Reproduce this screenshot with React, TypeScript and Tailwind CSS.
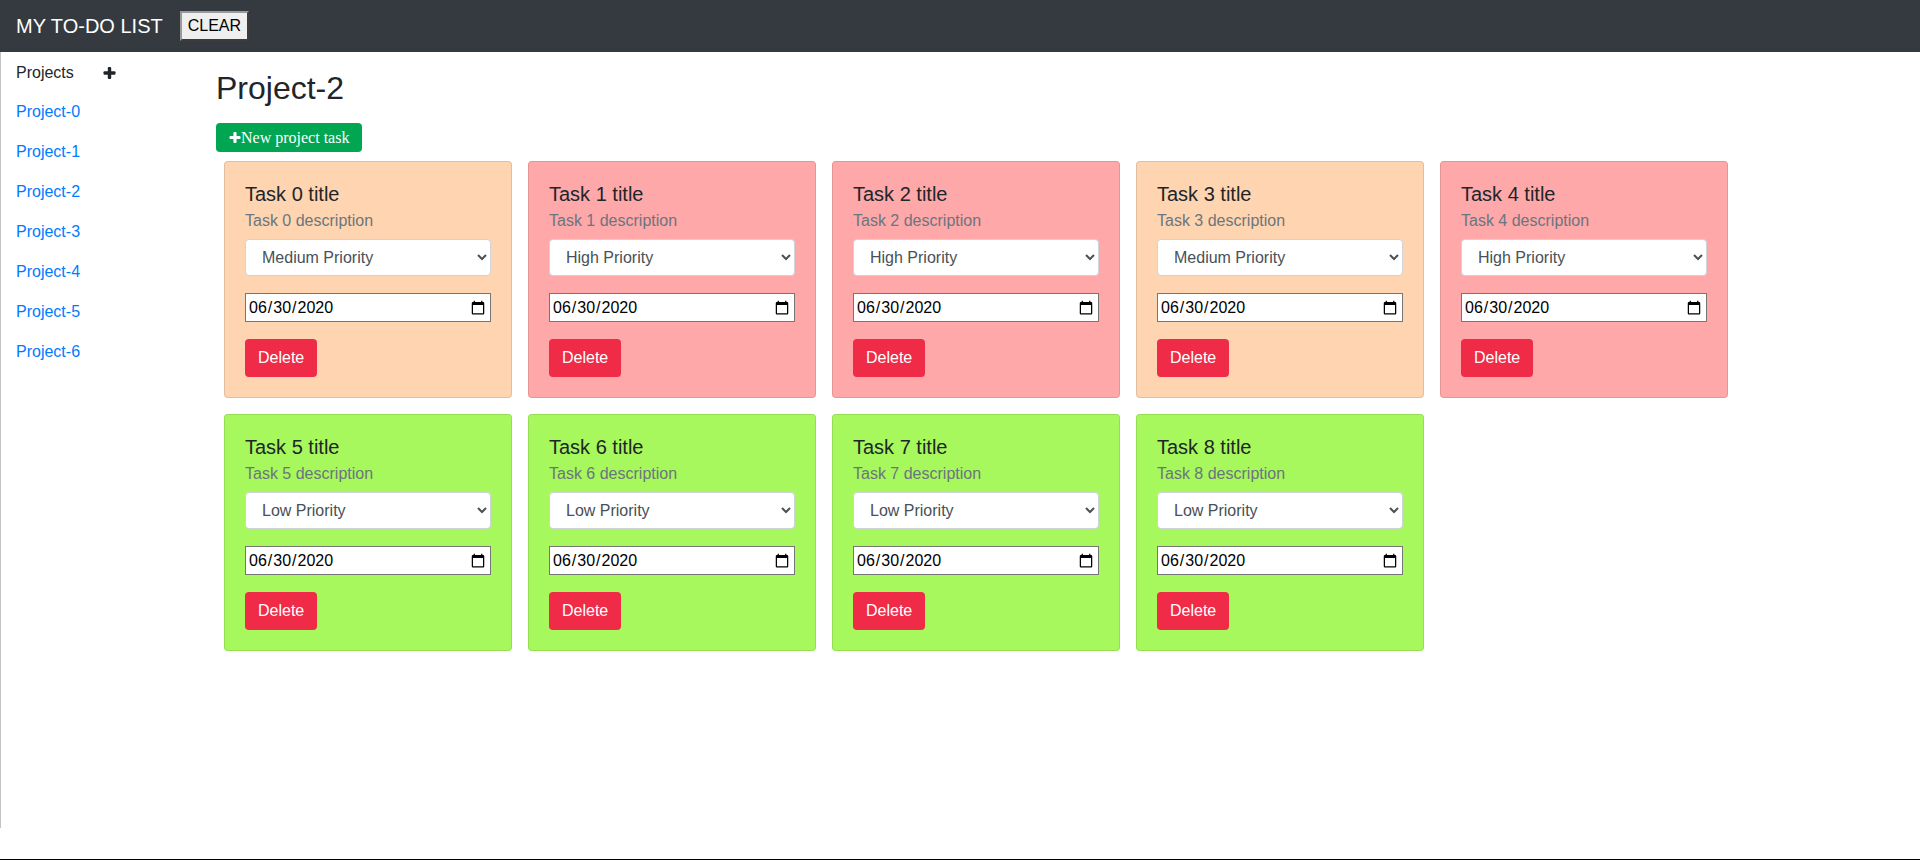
import { useState } from 'react';

type Priority = 'High' | 'Medium' | 'Low';

const cardColors: Record<Priority, string> = {
  High: 'bg-[#fea8a9]',
  Medium: 'bg-[#fed5b0]',
  Low: 'bg-[#a6f85c]',
};

const initialTasks: { id: number; priority: Priority }[] = [
  { id: 0, priority: 'Medium' },
  { id: 1, priority: 'High' },
  { id: 2, priority: 'High' },
  { id: 3, priority: 'Medium' },
  { id: 4, priority: 'High' },
  { id: 5, priority: 'Low' },
  { id: 6, priority: 'Low' },
  { id: 7, priority: 'Low' },
  { id: 8, priority: 'Low' },
];

const projects = ['Project-0', 'Project-1', 'Project-2', 'Project-3', 'Project-4', 'Project-5', 'Project-6'];

function PlusIcon({ className }: { className?: string }) {
  return (
    <svg viewBox="0 0 14 14" className={className} fill="currentColor">
      <rect x="5" y="0" width="4" height="14" rx="1.2" />
      <rect x="0" y="5" width="14" height="4" rx="1.2" />
    </svg>
  );
}

function TaskCard({ id, priority, onDelete }: { id: number; priority: Priority; onDelete: () => void }) {
  const [value, setValue] = useState<Priority>(priority);
  return (
    <div className={`w-[288px] rounded border border-black/10 px-5 pt-5 pb-5 ${cardColors[value]}`}>
      <h5 className="h-6 text-[20px] leading-6 text-[#212529]">Task {id} title</h5>
      <div className="mt-[3px] h-6 text-base leading-6 text-[#6c757d]">Task {id} description</div>
      <select
        value={value}
        onChange={(e) => setValue(e.target.value as Priority)}
        className="mt-[6px] block h-[37px] w-full rounded border border-[#ced4da] bg-white pl-3 pr-1 text-base text-[#495057]"
      >
        <option value="High">High Priority</option>
        <option value="Medium">Medium Priority</option>
        <option value="Low">Low Priority</option>
      </select>
      <input
        type="date"
        defaultValue="2020-06-30"
        className="mt-[17px] block h-[29px] w-full border border-[#767676] bg-white px-[2px] text-base text-black"
      />
      <button
        onClick={onDelete}
        className="mt-[17px] block h-[38px] rounded bg-[#ef2b47] px-[13px] text-base text-white"
      >
        Delete
      </button>
    </div>
  );
}

export default function App() {
  const [tasks, setTasks] = useState(initialTasks);
  const active = 'Project-2';

  return (
    <div className="flex h-[860px] flex-col bg-white font-['Liberation_Sans',Arial,sans-serif]">
      {/* Top bar */}
      <header className="flex h-[52px] shrink-0 items-center bg-[#343a40] px-4">
        <span className="text-[20px] text-white">MY TO-DO LIST</span>
        <button
          onClick={() => setTasks([])}
          className="ml-[17px] h-[30px] border-2 border-t-[#9a9a9a] border-l-[#9a9a9a] border-r-[#3c3c3c] border-b-[#3c3c3c] bg-[#efefef] px-[6px] text-base leading-none text-black"
        >
          CLEAR
        </button>
      </header>

      <div className="flex h-[776px] shrink-0">
        {/* Sidebar */}
        <aside className="w-[216px] shrink-0 border-l border-[#c4c4c4]">
          <div className="flex items-center pt-[9px] pb-[7px] pl-[15px] text-base leading-6 text-[#212529]">
            Projects
            <PlusIcon className="ml-[29px] h-[12px] w-[13px] text-[#212529]" />
          </div>
          {projects.map((p) => (
            <a key={p} href="#" className="block py-2 pl-[15px] text-base leading-6 text-[#007bff]">
              {p}
            </a>
          ))}
        </aside>

        {/* Main */}
        <main className="flex-1 pt-[17px]">
          <h2 className="h-[38px] text-[32px] leading-[38px] text-[#212529]">{active}</h2>
          <button className="mt-[16px] flex h-[29px] items-center rounded bg-[#00a651] px-[13px] font-['Liberation_Serif',serif] text-base text-white">
            <PlusIcon className="h-[11px] w-[12px]" />
            New project task
          </button>
          <div className="ml-2 mt-[9px] grid grid-cols-[repeat(5,288px)] gap-4">
            {tasks.map((t) => (
              <TaskCard
                key={t.id}
                id={t.id}
                priority={t.priority}
                onDelete={() => setTasks(tasks.filter((x) => x.id !== t.id))}
              />
            ))}
          </div>
        </main>
      </div>

      <div className="flex-1" />
      <div className="h-px shrink-0 bg-black" />
    </div>
  );
}
